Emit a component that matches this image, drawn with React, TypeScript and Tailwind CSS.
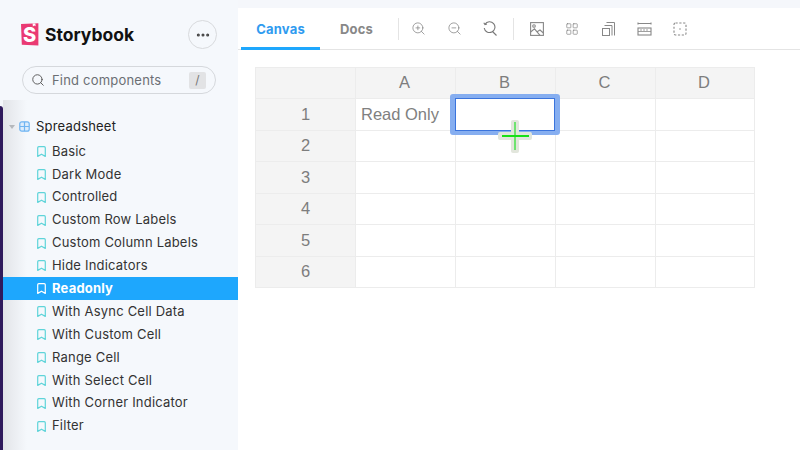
import { Search, ZoomIn, ZoomOut, LayoutGrid, Bookmark, Ellipsis } from "lucide-react";

const stories = [
  "Basic",
  "Dark Mode",
  "Controlled",
  "Custom Row Labels",
  "Custom Column Labels",
  "Hide Indicators",
  "Readonly",
  "With Async Cell Data",
  "With Custom Cell",
  "Range Cell",
  "With Select Cell",
  "With Corner Indicator",
  "Filter",
];

const cols = ["A", "B", "C", "D"];
const rows = [1, 2, 3, 4, 5, 6];

function Logo() {
  return (
    <svg width="19" height="23" viewBox="0 0 19 23" className="shrink-0">
      <path d="M1 1 18.4 .3V22.6L1.8 21.8Z" fill="#ea3a73" />
      <path d="M12.6 .6 12.9 3.4 14.2 2.4 15.6 3.3 15.4 .4Z" fill="#fff" />
      <text x="9.6" y="18.5" textAnchor="middle" fontSize="20" fontWeight="800" fill="#fff" fontFamily="Inter, sans-serif">
        S
      </text>
    </svg>
  );
}

function Sidebar() {
  return (
    <aside className="w-[238px] shrink-0 h-full bg-[#f5f8fc] relative flex flex-col">
      <div className="absolute left-[3px] top-[100px] bottom-0 w-[24px] bg-gradient-to-r from-[#e2e4e8] to-transparent" />
      <div className="absolute left-0 top-[106px] bottom-0 w-[3px] rounded-tr-[3px] bg-[#2f1a5c]" />
      <div className="relative flex items-center pl-[20px] pr-[21px] pt-[19px]">
        <Logo />
        <span className="ml-[6px] text-[17.5px] font-bold text-[#111] leading-[30px] mt-[1px]">Storybook</span>
        <div className="ml-auto w-[29px] h-[29px] rounded-full border border-[#d8dadd] flex items-center justify-center">
          <Ellipsis size={16} strokeWidth={2.6} className="text-[#444]" />
        </div>
      </div>
      <div className="relative mx-[22px] mt-[16px] h-[28px] rounded-full border border-[#d5d8dc] flex items-center pl-[8px] pr-[9px]">
        <Search size={14} strokeWidth={1.6} className="text-[#555]" />
        <span className="ml-[7px] text-[13px] text-[#6b6f74] tracking-[0.2px] translate-y-[1px]">Find components</span>
        <span className="ml-auto w-[17px] h-[17px] rounded-[2px] bg-[#e2e3e5] text-[#777] text-[12px] flex items-center justify-center">/</span>
      </div>
      <div className="relative flex items-center h-[23px] mt-[21px] pl-[9px]">
        <span className="w-0 h-0 border-x-[3px] border-x-transparent border-t-[4px] border-t-[#b5b8bc]" />
        <svg width="11" height="11" viewBox="0 0 11 11" className="ml-[4px]" fill="none" stroke="#6eb4f2" strokeWidth="1.2">
          <rect x="0.8" y="0.8" width="9.4" height="9.4" rx="2" fill="#dcecfb" />
          <path d="M5.5 1v9M1 5.5h9" />
        </svg>
        <span className="ml-[6px] text-[13px] text-[#222] tracking-[0.2px]">Spreadsheet</span>
      </div>
      <ul className="relative mt-[2px]">
        {stories.map((s) => {
          const active = s === "Readonly";
          return (
            <li
              key={s}
              className={`h-[22.9px] flex items-center text-[13px] tracking-[0.2px] ${
                active ? "bg-[#1ea7fd] text-white font-bold ml-[3px] pl-[32px]" : "text-[#333] pl-[35px]"
              }`}
            >
              <Bookmark size={13} strokeWidth={2.2} className={active ? "text-white" : "text-[#5fd4d9]"} />
              <span className="ml-[4px]">{s}</span>
            </li>
          );
        })}
      </ul>
    </aside>
  );
}

function Reset() {
  return (
    <svg width="16" height="16" viewBox="0 0 16 16" fill="none" stroke="#777" strokeWidth="1.1">
      <path d="M3 3.2A5.4 5.4 0 1 1 2.2 7" />
      <path d="M1.8 1.8 3 3.6l2-.6" />
      <path d="m10.5 10.5 4 4" />
    </svg>
  );
}

function Photo() {
  return (
    <svg width="14" height="14" viewBox="0 0 14 14" fill="none" stroke="#888" strokeWidth="1.1">
      <rect x="0.6" y="0.6" width="12.8" height="12.8" />
      <circle cx="4" cy="4" r="1.3" />
      <path d="M.6 10 4.5 6.8l5.5 6.6M7.5 9.5 10 8l3.4 3" />
    </svg>
  );
}

function Stack() {
  return (
    <svg width="14" height="14" viewBox="0 0 14 14" fill="none" stroke="#888" strokeWidth="1">
      <rect x="1.5" y="6.5" width="7" height="7" />
      <path d="M3.5 3.5h7.5v10M5.5 .5h8v13" />
    </svg>
  );
}

function RulerBar() {
  return (
    <svg width="15" height="14" viewBox="0 0 15 14" fill="none" stroke="#888" strokeWidth="1.1">
      <path d="M1 1.5h13M1 .5v2M14 .5v2" />
      <rect x="1" y="6" width="13" height="7" />
      <path d="M1 9.5h13M4 7v2M7 7v2M10 7v2" strokeWidth="0.8" />
    </svg>
  );
}

function Outline() {
  return (
    <svg width="14" height="14" viewBox="0 0 14 14" fill="none" stroke="#888" strokeWidth="1.1">
      <rect x="1" y="1" width="12" height="12" rx="1.5" strokeDasharray="2.2 1.6" />
      <circle cx="7" cy="7" r="0.7" fill="#777" stroke="none" />
    </svg>
  );
}

function Toolbar() {
  return (
    <div className="h-[42px] shrink-0 border-b border-[#e4e4e4] flex items-stretch text-[13px] pl-[3px]">
      <div className="w-[79px] flex items-center justify-center font-bold text-[#2f9bf0] border-b-[3px] border-[#1ea7fd] -mb-px pt-[5px] tracking-[0.2px]">
        Canvas
      </div>
      <div className="w-[73px] flex items-center justify-center font-bold text-[#888] tracking-[0.2px] pt-[3px]">Docs</div>
      <div className="flex items-center text-[#777]">
        <span className="w-px h-[22px] bg-[#e4e4e4] ml-[5px]" />
        <ZoomIn size={15} strokeWidth={1.1} className="ml-[12px]" />
        <ZoomOut size={15} strokeWidth={1.1} className="ml-[21px]" />
        <span className="ml-[20px]"><Reset /></span>
        <span className="w-px h-[22px] bg-[#e4e4e4] ml-[15px]" />
        <span className="ml-[16px]"><Photo /></span>
        <LayoutGrid size={14} strokeWidth={1.1} className="ml-[21px]" />
        <span className="ml-[22px]"><Stack /></span>
        <span className="ml-[22px]"><RulerBar /></span>
        <span className="ml-[21px]"><Outline /></span>
      </div>
    </div>
  );
}

function Sheet() {
  const cell = "border-r border-b border-[#ececec] flex items-center justify-center";
  const head = `${cell} bg-[#f4f4f4] text-[#7d7d7d]`;
  return (
    <div className="relative w-[500px] ml-[17px] mt-[17px] font-['Liberation_Sans',sans-serif] text-[16.5px]">
      <div className="grid grid-cols-[100px_100px_100px_100px_99px] grid-rows-[31px_repeat(6,31.5px)] border-l border-t border-[#ececec]">
        <div className={head} />
        {cols.map((c) => (
          <div key={c} className={`${head} pr-[2px] pb-[2px]`}>{c}</div>
        ))}
        {rows.map((r) => (
          <div key={r} className="contents">
            <div className={head}>{r}</div>
            {cols.map((c) => (
              <div key={c} className={`${cell} text-[#808080] justify-start pl-[5px]`}>
                {r === 1 && c === "A" ? "Read Only" : ""}
              </div>
            ))}
          </div>
        ))}
      </div>
      <div className="absolute left-[195px] top-[27px] w-[110px] h-[41px] rounded-[3px] border-x-[5px] border-y-[4px] border-[#86aef0] bg-white">
        <div className="h-full border-[1.5px] border-[#3b74dc]" />
      </div>
      <div className="absolute left-[243px] top-[53px] w-[34px] h-[33px]">
        <div className="absolute left-[13px] top-0 w-[8px] h-full bg-[#e2e6dc] rounded-[2px]" />
        <div className="absolute left-0 top-[12px] h-[8px] w-full bg-[#e2e6dc] rounded-[2px]" />
        <div className="absolute left-[16px] top-[2px] w-[2px] h-[28px] bg-[#6fe36f]" />
        <div className="absolute left-[4px] top-[15px] h-[2px] w-[27px] bg-[#18e018]" />
      </div>
    </div>
  );
}

export default function App() {
  return (
    <div className="w-[800px] h-[450px] overflow-hidden flex bg-white font-['Inter',sans-serif]">
      <Sidebar />
      <main className="flex-1 flex flex-col">
        <div className="h-[8px] shrink-0 bg-[#f5f7fb]" />
        <Toolbar />
        <Sheet />
      </main>
    </div>
  );
}
